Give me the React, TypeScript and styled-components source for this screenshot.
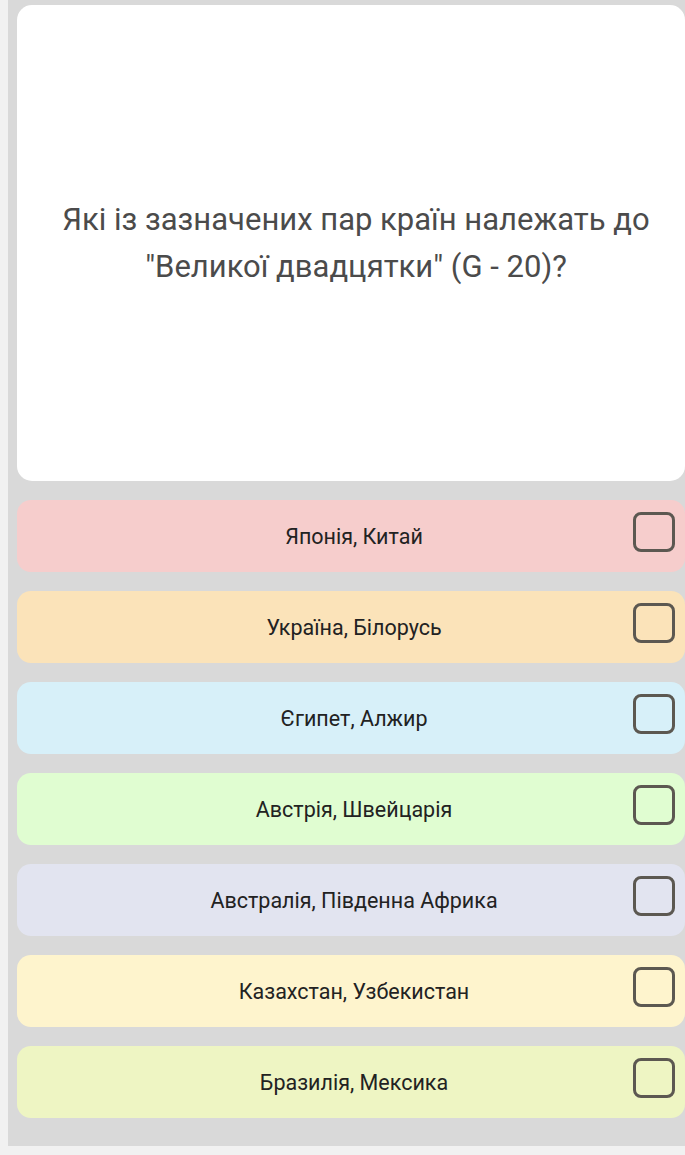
import styled, { createGlobalStyle } from "styled-components";

const GlobalStyle = createGlobalStyle`
  html, body {
    margin: 0;
    padding: 0;
    background: #f1f1f1;
    font-family: Roboto, "Liberation Sans", sans-serif;
    overflow: hidden;
  }
`;

const Page = styled.div`
  width: 685px;
  height: 1155px;
  background: #f1f1f1;
`;

const Panel = styled.div`
  margin-left: 8px;
  padding: 5px 0 28px 9px;
  background: #d9d9d9;
  display: flex;
  flex-direction: column;
  gap: 19px;
`;

const QuestionCard = styled.div`
  height: 476px;
  background: #ffffff;
  border-radius: 15px;
  display: flex;
  align-items: center;
  justify-content: center;
  padding: 0 10px 0 20px;
  box-sizing: border-box;
`;

const QuestionText = styled.p`
  margin: 0;
  text-align: center;
  font-size: 31px;
  line-height: 47px;
  color: #4b4b4b;
  white-space: nowrap;
`;

const Options = styled.div`
  display: flex;
  flex-direction: column;
  gap: 19px;
`;

const Option = styled.div<{ $bg: string }>`
  height: 72px;
  background: ${(p) => p.$bg};
  border-radius: 14px;
  display: grid;
  grid-template-columns: 62px 1fr 56px;
  align-items: start;
`;

const OptionLabel = styled.span`
  grid-column: 2;
  align-self: center;
  text-align: center;
  font-size: 21.5px;
  color: #222222;
`;

const CheckBox = styled.span`
  grid-column: 3;
  justify-self: end;
  margin: 12px 10px 0 0;
  width: 42px;
  height: 40px;
  box-sizing: border-box;
  border: 3px solid #5c5851;
  border-radius: 8px;
`;

const options = [
  { label: "Японія, Китай", bg: "#f6cdcc" },
  { label: "Україна, Білорусь", bg: "#fbe3b9" },
  { label: "Єгипет, Алжир", bg: "#d7f0f9" },
  { label: "Австрія, Швейцарія", bg: "#e0fdd1" },
  { label: "Австралія, Південна Африка", bg: "#e2e4f0" },
  { label: "Казахстан, Узбекистан", bg: "#fef4cd" },
  { label: "Бразилія, Мексика", bg: "#eef5c3" },
];

export default function App() {
  return (
    <Page>
      <GlobalStyle />
      <Panel>
        <QuestionCard>
          <QuestionText>
            Які із зазначених пар країн належать до
            <br />
            "Великої двадцятки" (G - 20)?
          </QuestionText>
        </QuestionCard>
        <Options>
          {options.map((o) => (
            <Option key={o.label} $bg={o.bg}>
              <OptionLabel>{o.label}</OptionLabel>
              <CheckBox />
            </Option>
          ))}
        </Options>
      </Panel>
    </Page>
  );
}
